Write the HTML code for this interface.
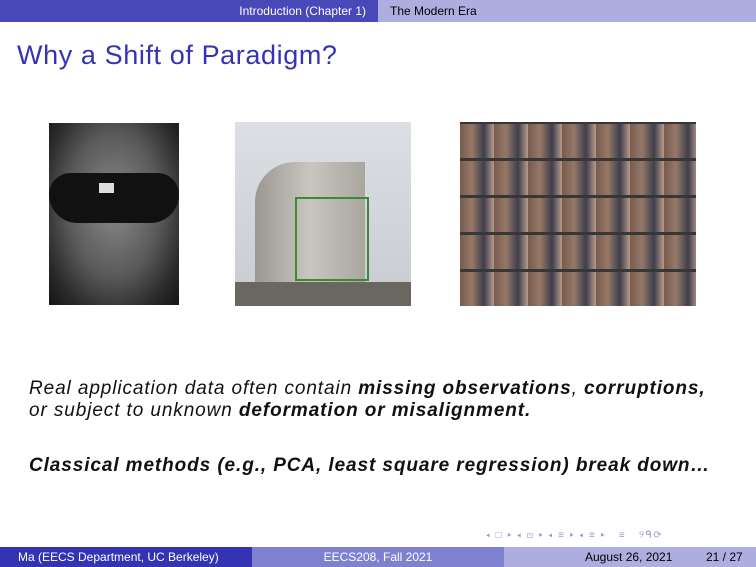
<!DOCTYPE html>
<html><head><meta charset="utf-8"><style>
body{margin:0;width:756px;height:567px;position:relative;background:#fff;font-family:"Liberation Sans",sans-serif;overflow:hidden}
.a{position:absolute}
</style></head><body>
<div class="a" style="left:0;top:0;width:378px;height:22px;background:#4848b8;color:#fff;font-size:12px;line-height:22px;text-align:right;box-sizing:border-box;padding-right:12px">Introduction (Chapter 1)</div>
<div class="a" style="left:378px;top:0;width:378px;height:22px;background:#adaddf;color:#000;font-size:12px;line-height:22px;padding-left:12px;box-sizing:border-box">The Modern Era</div>
<div class="a" style="left:17px;top:40px;font-size:27px;color:#3333b3;letter-spacing:0.6px">Why a Shift of Paradigm?</div>

<div class="a" style="left:49px;top:123px;width:130px;height:182px;background:radial-gradient(ellipse at 50% 45%,#8a8a8a 0%,#5a5a5a 50%,#2a2a2a 80%,#151515 100%)">
 <div class="a" style="left:0;top:50px;width:130px;height:50px;background:#111;border-radius:30px 30px 40px 40px"></div>
 <div class="a" style="left:50px;top:60px;width:15px;height:10px;background:#ddd"></div>
</div>
<div class="a" style="left:235px;top:122px;width:176px;height:184px;background:linear-gradient(#dcdfe4,#c8cbd0)">
 <div class="a" style="left:20px;top:40px;width:110px;height:144px;background:linear-gradient(90deg,#9a9890,#c8c6be,#a8a69e);border-radius:40px 0 0 0"></div>
 <div class="a" style="left:60px;top:75px;width:70px;height:80px;border:2px solid #3a8a3a"></div>
 <div class="a" style="left:0;top:160px;width:176px;height:24px;background:#6a6660"></div>
</div>
<div class="a" style="left:460px;top:122px;width:236px;height:184px;background:repeating-linear-gradient(90deg,#6a4a3a 0,#8a6a58 12px,#2a2a3a 24px,#b09080 34px),#555;opacity:.9">
 <div class="a" style="left:0;top:0;width:236px;height:184px;background:repeating-linear-gradient(0deg,transparent 0,transparent 34px,#222 34px,#222 37px)"></div>
</div>

<div class="a" style="left:29px;top:378px;font-size:19px;letter-spacing:0.9px;font-style:italic;line-height:22px;color:#111;white-space:nowrap">Real application data often contain <b>missing observations</b>, <b>corruptions,</b><br>or subject to unknown <b>deformation or misalignment.</b></div>
<div class="a" style="left:29px;top:455px;font-size:19px;letter-spacing:0.9px;font-style:italic;font-weight:bold;color:#111;white-space:nowrap">Classical methods (e.g., PCA, least square regression) break down…</div>

<div class="a" style="left:486px;top:530px;font-size:10px;color:#9a9ac8;letter-spacing:1.5px;white-space:nowrap">◂ □ ▸ ◂ ⊡ ▸ ◂ ≡ ▸ ◂ ≡ ▸ &nbsp; ≡ &nbsp; ୨ᑫ⟳</div>
<div class="a" style="left:0;top:547px;width:252px;height:20px;background:#3333b3;color:#fff;font-size:12px;line-height:20px;padding-left:18px;box-sizing:border-box">Ma (EECS Department, UC Berkeley)</div>
<div class="a" style="left:252px;top:547px;width:252px;height:20px;background:#8080d0;color:#fff;font-size:12px;line-height:20px;text-align:center">EECS208, Fall 2021</div>
<div class="a" style="left:504px;top:547px;width:252px;height:20px;background:#adaddf;color:#000;font-size:12px;line-height:20px"><span class="a" style="left:81px">August 26, 2021</span><span class="a" style="left:202px">21 / 27</span></div>
</body></html>
